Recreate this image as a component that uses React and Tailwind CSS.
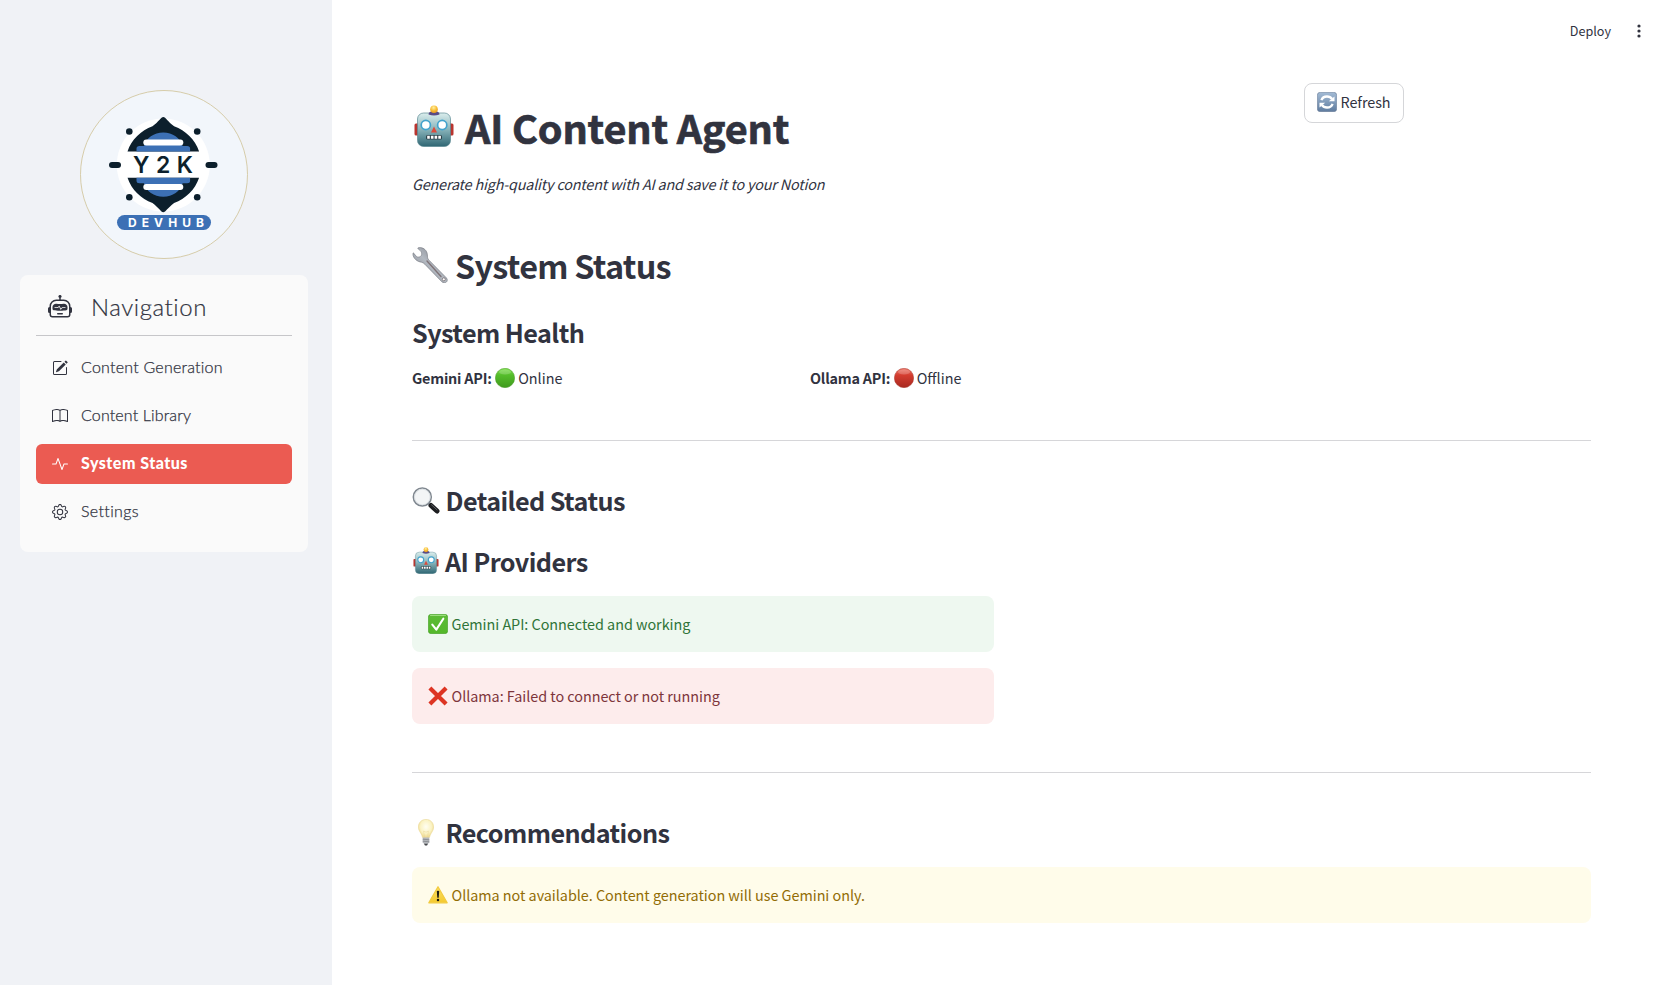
import { BsRobot, BsPencilSquare, BsBook, BsActivity, BsGear } from "react-icons/bs";

function Logo() {
  return (
    <svg viewBox="0 0 168 169" className="h-[169px] w-[168px]">
      <ellipse cx="84" cy="84.5" rx="83.5" ry="84" fill="#f2f6fb" stroke="#d3c7a0" strokeWidth="0.9" />
      <circle cx="83.3" cy="75" r="46.5" fill="#fff" />
      <path d="M83.3 27c-2.300 0-4.500 4.700-10.800 9.300C61 40.500 51.500 49.500 47.500 61.500h71.600c-4-12-13.500-21-25-25.200C87.800 31.700 85.600 27 83.300 27z" fill="#0c1f2c" />
      <path d="M83.300 122.300c-2.300 0-4.500-4.700-10.800-9.300-11.500-4.200-21-13.200-25-25.200h71.600c-4 12-13.500 21-25 25.200-6.300 4.600-8.500 9.300-10.800 9.300z" fill="#0c1f2c" />
      <path d="M56.500 61.500v-3q0-2.500 3-2.500h4.500c2-8 10-13.500 19.300-13.500S100.500 48 102.600 56h4.500q3 0 3 2.500v3z" fill="#3c70b5" />
      <path d="M56.500 87.800v3q0 2.500 3 2.500h4.500c2 8 10 13.500 19.300 13.500s17.200-5.500 19.300-13.500h4.500q3 0 3-2.500v-3z" fill="#3c70b5" />
      <rect x="63.300" y="49.500" width="40" height="6" rx="3" fill="#fff" />
      <rect x="63.300" y="94" width="40" height="6" rx="3" fill="#fff" />
      <g fill="#0c1f2c">
        <circle cx="49.300" cy="41.500" r="3.300" />
        <circle cx="117.200" cy="41.500" r="3.300" />
        <circle cx="49.300" cy="107.300" r="3.300" />
        <circle cx="117.200" cy="107.300" r="3.300" />
        <rect x="29" y="72" width="12" height="6" rx="3" />
        <rect x="125.500" y="72" width="12" height="6" rx="3" />
      </g>
      <text x="53" y="83" textLength="60" className="font-['Inter'] text-[23px] font-semibold" fill="#0c1f2c">Y2K</text>
      <rect x="37" y="125" width="94" height="15" rx="7.500" fill="#3c70b5" />
      <text x="48" y="136.800" textLength="76" className="font-['Inter'] text-[12px] font-bold" fill="#fff">DEVHUB</text>
    </svg>
  );
}

function RobotFace({ className }) {
  return (
    <svg viewBox="0 0 40 42" className={className}>
      <defs>
        <linearGradient id="robotBody" x1="0" y1="0" x2="0" y2="1">
          <stop offset="0" stopColor="#dbeeed" />
          <stop offset="0.45" stopColor="#8fb9bf" />
          <stop offset="1" stopColor="#2f6673" />
        </linearGradient>
        <radialGradient id="robotBulb" cx="0.45" cy="0.3" r="0.8">
          <stop offset="0" stopColor="#fff0a0" />
          <stop offset="0.5" stopColor="#f8bd37" />
          <stop offset="1" stopColor="#dd8b1b" />
        </radialGradient>
      </defs>
      <rect x="0.500" y="18.500" width="5" height="12" rx="1.500" fill="#b9352f" />
      <rect x="34.500" y="18.500" width="5" height="12" rx="1.500" fill="#b9352f" />
      <rect x="3.500" y="8" width="33" height="33.500" rx="6" fill="url(#robotBody)" stroke="#5b8993" strokeWidth="0.700" />
      <path d="M14.500 9.500q0-3.500 5.500-3.500t5.500 3.500q-5.500 2-11 0z" fill="#594b86" />
      <circle cx="20" cy="4.200" r="3.800" fill="url(#robotBulb)" />
      <circle cx="11.800" cy="20" r="4.600" fill="#fff" stroke="#43a3cd" strokeWidth="1.700" />
      <circle cx="28.200" cy="20" r="4.600" fill="#fff" stroke="#43a3cd" strokeWidth="1.700" />
      <path d="M20 21.500l3 6h-6z" fill="#dd4a3c" />
      <rect x="12" y="30" width="16" height="4.600" rx="1.500" fill="#2c3f47" />
      <path d="M13.200 30.800h2.600v3h-2.600zM16.900 30.800h2.600v3h-2.600zM20.600 30.800h2.600v3h-2.600zM24.300 30.800h2.600v3h-2.600z" fill="#fff" />
    </svg>
  );
}

function Wrench({ className }) {
  return (
    <svg viewBox="0 0 36 36" className={className}>
      <defs>
        <linearGradient id="wrenchSteel" x1="0" y1="1" x2="1" y2="0">
          <stop offset="0" stopColor="#7b7e86" />
          <stop offset="0.5" stopColor="#b3b9c1" />
          <stop offset="1" stopColor="#6c6f77" />
        </linearGradient>
      </defs>
      <path d="M6.300 0.800C9.300 0 13 1.500 14.600 4.800c1 2.100.8 4 .9 5.400.1 1.300.9 2.300 2 3.500L34.500 31c2.400 3.300-1.300 6.200-4.500 3.900L12.800 17.200c-1-1-2-1.700-3.300-2C5.500 14.700 1.100 11.800.9 6.800c-.1-.9.700-1 1.200-.3 1.400 2.300 2.900 4 5 3.600 2-.5 3.100-2.400 2.500-4.300C9.300 4.200 7.500 3 6.100 1.800c-.5-.4-.4-.9.200-1z" fill="url(#wrenchSteel)" stroke="#6f727a" strokeWidth="0.600" />
      <path d="M15 14L29 29.500" stroke="#7f7377" strokeWidth="1.400" strokeLinecap="round" />
      <circle cx="31.800" cy="32.300" r="1.500" fill="#fff" stroke="#6a5f62" strokeWidth="0.700" />
    </svg>
  );
}

function Magnifier({ className }) {
  return (
    <svg viewBox="0 0 28 27" className={className}>
      <path d="M16.500 16l3 3" stroke="#8f949a" strokeWidth="2.400" />
      <path d="M19 18.500l6 5.500" stroke="#1c1d20" strokeWidth="5" strokeLinecap="round" />
      <path d="M19.500 17.800l5.500 5" stroke="#5e6166" strokeWidth="1" strokeLinecap="round" />
      <circle cx="10.300" cy="10" r="9" fill="#f3f5f6" stroke="#7f878f" strokeWidth="1.500" />
      <circle cx="10.300" cy="10" r="7.800" fill="none" stroke="#d3d8dc" strokeWidth="0.700" />
    </svg>
  );
}

function Bulb({ className }) {
  return (
    <svg viewBox="0 0 16 27" className={className}>
      <defs>
        <radialGradient id="bulbGlow" cx="0.5" cy="0.4" r="0.6">
          <stop offset="0" stopColor="#fffef2" />
          <stop offset="0.6" stopColor="#fbf3c4" />
          <stop offset="1" stopColor="#ecd68a" />
        </radialGradient>
      </defs>
      <path d="M8 .4c4.500 0 7.600 3.300 7.600 7.600 0 3.800-2.500 5.600-3.400 8.300-.5 1.500-.7 2.500-1.200 2.500H5c-.5 0-.7-1-1.200-2.500C2.900 13.600.4 11.800.4 8 .4 3.700 3.500.4 8 .4z" fill="url(#bulbGlow)" stroke="#ebd893" strokeWidth="0.600" />
      <path d="M6.500 18.500L5.600 12l2.400 1.200 2.400-1.200-.9 6.500" fill="none" stroke="#e8d596" strokeWidth="0.500" />
      <path d="M4.700 18.600h6.600v4.600L9.800 25H6.200l-1.500-1.800z" fill="#b5b8bc" />
      <path d="M4.700 20.200l6.600.6M4.700 22.200l6.600.6" stroke="#7d8085" strokeWidth="0.700" />
      <path d="M6 24.800h4l-1 1.800H7z" fill="#45474b" />
    </svg>
  );
}

function Ball({ tone }) {
  const green = tone === "green";
  const id = green ? "ballGreen" : "ballRed";
  return (
    <svg viewBox="0 0 20 20" className="h-5 w-5">
      <defs>
        <linearGradient id={id} x1="0" y1="0" x2="0" y2="1">
          <stop offset="0" stopColor={green ? "#7fe04f" : "#ef7b6c"} />
          <stop offset="0.35" stopColor={green ? "#55bd2b" : "#d43d30"} />
          <stop offset="1" stopColor={green ? "#3f9a1d" : "#a8281f"} />
        </linearGradient>
      </defs>
      <circle cx="10" cy="10" r="9.700" fill={`url(#${id})`} stroke={green ? "#4c9a2a" : "#a93a30"} strokeWidth="0.500" />
      <ellipse cx="10" cy="4" rx="6" ry="2.600" fill="#fff" opacity="0.200" />
    </svg>
  );
}

function RefreshTile() {
  return (
    <svg viewBox="0 0 20 20" className="h-5 w-5">
      <defs>
        <linearGradient id="tileBlue" x1="0" y1="0" x2="0" y2="1">
          <stop offset="0" stopColor="#a3bbd5" />
          <stop offset="1" stopColor="#5f7c9f" />
        </linearGradient>
      </defs>
      <rect x="0.300" y="0.300" width="19.400" height="19.400" rx="3" fill="url(#tileBlue)" stroke="#6d8098" strokeWidth="0.600" />
      <path d="M4.400 8.200C5.300 5.600 7.500 4.500 10 4.500c2.200 0 4 .9 5.100 2.500" fill="none" stroke="#fff" strokeWidth="2.300" />
      <path d="M11.800 9.300h5.700V4.400z" fill="#fff" />
      <path d="M15.600 11.800c-.9 2.600-3.100 3.700-5.600 3.700-2.200 0-4-.9-5.100-2.500" fill="none" stroke="#fff" strokeWidth="2.300" />
      <path d="M8.200 10.700H2.500v4.900z" fill="#fff" />
    </svg>
  );
}

function CheckTile() {
  return (
    <svg viewBox="0 0 20 20" className="h-5 w-5">
      <defs>
        <linearGradient id="tileGreen" x1="0" y1="0" x2="0" y2="1">
          <stop offset="0" stopColor="#5cbb37" />
          <stop offset="1" stopColor="#54b82a" />
        </linearGradient>
      </defs>
      <rect x="0.300" y="0.300" width="19.400" height="19.400" rx="3" fill="url(#tileGreen)" stroke="#479e2a" strokeWidth="0.600" />
      <path d="M2.500 1.400h15" stroke="#a2e184" strokeWidth="1" strokeLinecap="round" />
      <path d="M4.300 10.600l4 5L15.300 4.700" fill="none" stroke="#fff" strokeWidth="2.100" strokeLinecap="round" strokeLinejoin="round" />
    </svg>
  );
}

function CrossMark() {
  return (
    <svg viewBox="0 0 20 20" className="h-5 w-5">
      <path d="M1.900 2l16.200 16M18.100 2l-16.200 16" stroke="#dd3423" strokeWidth="4.200" />
    </svg>
  );
}

function WarningSign() {
  return (
    <svg viewBox="0 0 20 20" className="h-5 w-5">
      <defs>
        <linearGradient id="warnYellow" x1="0" y1="0" x2="0" y2="1">
          <stop offset="0" stopColor="#fbdf62" />
          <stop offset="1" stopColor="#f4c92f" />
        </linearGradient>
      </defs>
      <path d="M10 1.700L19.200 17.800H.8z" fill="url(#warnYellow)" stroke="#f2ca3e" strokeWidth="1.200" strokeLinejoin="round" />
      <path d="M8.800 6.100q1.200-.9 2.400 0l-.5 6.600H9.300z" fill="#1c1a12" />
      <circle cx="10" cy="15" r="1.250" fill="#1c1a12" />
    </svg>
  );
}

const navItems = [
  { label: "Content Generation", Icon: BsPencilSquare, track: "tracking-[0.23px]" },
  { label: "Content Library", Icon: BsBook, track: "tracking-[0.15px]" },
  { label: "System Status", Icon: BsActivity, active: true, track: "tracking-[0.5px]" },
  { label: "Settings", Icon: BsGear, track: "tracking-[0.36px]" },
];

function Sidebar() {
  return (
    <aside className="flex w-[332px] shrink-0 flex-col items-center bg-[#f0f2f6] pr-1 pt-[90px]">
      <Logo />
      <nav className="mt-4 flex h-[277px] w-[288px] flex-col rounded-lg bg-[#fafafa] px-4 font-['Lato',sans-serif] text-[#31333f]">
        <div className="flex h-[61px] items-center border-b border-[#c6c6c9] pl-3 pt-1">
          <BsRobot className="h-6 w-6" />
          <span className="ml-[19px] text-[24px] font-light leading-9 tracking-[0.55px] [-webkit-text-stroke:0.2px_#31333f]">Navigation</span>
        </div>
        <ul className="mt-3 flex flex-col gap-2">
          {navItems.map(({ label, Icon, active, track }) => (
            <li
              key={label}
              className={`flex h-10 items-center rounded-md pb-px pl-4 ${active ? "bg-[#eb5b52] font-black text-white" : "font-light [-webkit-text-stroke:0.25px_#31333f]"}`}
            >
              <Icon className="h-4 w-4" />
              <span className={`mb-px ml-[13px] text-base ${track}`}>{label}</span>
            </li>
          ))}
        </ul>
      </nav>
    </aside>
  );
}

function Alert({ icon, className, children }) {
  return (
    <div className={`flex h-14 items-center rounded-lg pl-4 text-[14.4px] tracking-[-0.035px] ${className}`}>
      {icon}
      <span className="ml-[3.5px]">{children}</span>
    </div>
  );
}

function Main() {
  return (
    <main className="flex min-w-0 flex-1 flex-col">
      <header className="flex h-[62px] items-center justify-end pr-7">
        <span className="text-[12.6px]">Deploy</span>
        <svg viewBox="0 0 8 16" className="ml-6 h-4 w-2" fill="currentColor">
          <circle cx="4" cy="3" r="1.600" />
          <circle cx="4" cy="8" r="1.600" />
          <circle cx="4" cy="13" r="1.600" />
        </svg>
      </header>
      <div className="flex flex-col pl-20 pr-20">
        <div className="flex h-[134px] justify-between">
          <div className="flex flex-col pt-[38px]">
            <h1 className="flex h-[53px] items-center text-[39.6px] font-bold leading-none">
              <RobotFace className="mb-0.5 ml-0.5 h-[42px] w-10" />
              <span className="ml-[11px] tracking-[-0.15px] [-webkit-text-stroke:0.7px_#31333f]">AI Content Agent</span>
            </h1>
            <p className="mt-[19px] h-6 text-[14.4px] italic leading-6 tracking-[-0.19px]">Generate high-quality content with AI and save it to your Notion</p>
          </div>
          <button className="mr-[187px] mt-[21px] flex h-10 w-[100px] items-center rounded-lg border border-[#d5d6d9] pb-0.5 pl-3 text-[14.4px] tracking-[-0.08px]">
            <RefreshTile />
            <span className="ml-[3.5px]">Refresh</span>
          </button>
        </div>
        <h2 className="mt-[47px] flex h-11 items-center text-[32.4px] font-bold leading-none tracking-[-0.74px]">
          <Wrench className="h-9 w-9" />
          <span className="ml-[7px]">System Status</span>
        </h2>
        <h3 className="mt-[29px] flex h-[34px] items-center text-[25.2px] font-bold leading-none tracking-[-0.57px]">System Health</h3>
        <div className="mt-4 flex h-6 text-[14.4px] leading-6">
          <div className="flex w-[398px] items-center">
            <b className="mr-[3.500px] tracking-[-0.22px]">Gemini API:</b>
            <Ball tone="green" />
            <span className="ml-[3px]">Online</span>
          </div>
          <div className="flex items-center">
            <b className="mr-[3.500px] tracking-[-0.22px]">Ollama API:</b>
            <Ball tone="red" />
            <span className="ml-[3px]">Offline</span>
          </div>
        </div>
        <hr className="mt-[50px] border-[#d6d6d9]" />
        <h3 className="mt-[43px] flex h-[34px] items-center text-[25.2px] font-bold leading-none tracking-[-0.57px]">
          <Magnifier className="mb-0.5 h-[27px] w-7" />
          <span className="ml-[5.5px]">Detailed Status</span>
        </h3>
        <h3 className="mt-[27px] flex h-[34px] items-center text-[25.2px] font-bold leading-none tracking-[-0.57px]">
          <RobotFace className="mb-1 ml-px h-[27px] w-[26px]" />
          <span className="ml-1.5">AI Providers</span>
        </h3>
        <div className="mt-[17px] flex w-[582px] flex-col gap-4">
          <Alert icon={<CheckTile />} className="bg-[#eef8f0] text-[#2f7438]">Gemini API: Connected and working</Alert>
          <Alert icon={<CrossMark />} className="bg-[#fdecec] text-[#7d353b]">Ollama: Failed to connect or not running</Alert>
        </div>
        <hr className="mt-12 border-[#d6d6d9]" />
        <h3 className="mt-[43px] flex h-[34px] items-center text-[25.2px] font-bold leading-none tracking-[-0.57px]">
          <Bulb className="mb-0.5 ml-1.5 h-[27px] w-4" />
          <span className="ml-[11.5px]">Recommendations</span>
        </h3>
        <Alert icon={<WarningSign />} className="mt-[17px] bg-[#fffcea] text-[#926c05]">Ollama not available. Content generation will use Gemini only.</Alert>
      </div>
    </main>
  );
}

export default function App() {
  return (
    <div className="flex h-[985px] w-[1671px] overflow-hidden bg-white font-['Noto_Sans_CJK_SC',sans-serif] text-[#31333f]">
      <Sidebar />
      <Main />
    </div>
  );
}
